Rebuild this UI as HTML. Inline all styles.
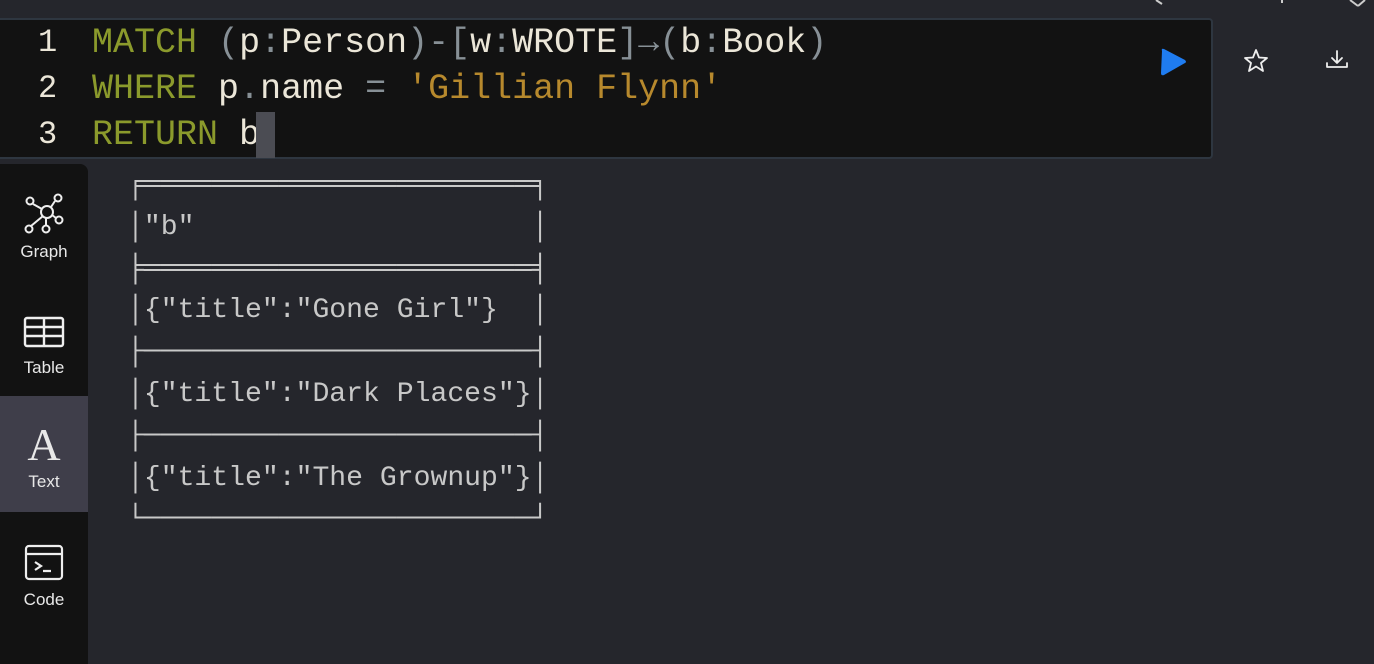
<!DOCTYPE html>
<html><head><meta charset="utf-8"><style>
*{margin:0;padding:0;box-sizing:border-box}
body{width:1374px;height:654px;background:#25262c;position:relative;overflow:hidden;font-family:"Liberation Sans",sans-serif}
.ed{position:absolute;left:-4px;top:18px;width:1217px;height:141px;background:#121212;border:2px solid #2e3640;border-radius:4px}
.code{position:absolute;left:0;top:20px;font-family:"Liberation Mono",monospace;font-size:35px;line-height:46px;white-space:pre;color:#ebe6d8}
.ln{position:absolute;left:38px;top:20px;font-family:"Liberation Mono",monospace;font-size:32px;line-height:46px;color:#ebe6d8;white-space:pre}
.k{color:#8b9a2c}.p{color:#879096}.s{color:#b7892d}
.cur{position:absolute;left:256px;top:112px;width:19px;height:46px;background:#4b4c53}
.side{position:absolute;left:0;top:164px;width:88px;height:500px;background:#121212;border-top-right-radius:8px}
.tab{position:absolute;left:0;width:88px;height:116px;color:#e8e8e8;font-size:17px;text-align:center}
.tab span{position:absolute;left:0;width:88px}
pre{position:absolute;left:127px;top:165px;font-family:"Liberation Mono",monospace;font-size:28.1px;line-height:41.8px;color:#c8c8c8}
</style></head><body>
<div class="ed"></div>
<div class="ln">1
2
3</div>
<div class="code" style="left:92px"><span class="k">MATCH</span> <span class="p">(</span>p<span class="p">:</span>Person<span class="p">)-[</span>w<span class="p">:</span>WROTE<span class="p">]→(</span>b<span class="p">:</span>Book<span class="p">)</span>
<span class="k">WHERE</span> p<span class="p">.</span>name <span class="p">=</span> <span class="s">'Gillian Flynn'</span>
<span class="k">RETURN</span> b</div>
<div class="cur"></div>
<svg style="position:absolute;left:1158px;top:46px" width="32" height="32"><path d="M4 5 Q3 2 6 3 L27 14 Q29 16 27 17 L6 29 Q3 30 3 27 Z" fill="#1f7cf0"/></svg>
<svg style="position:absolute;left:1242px;top:47px" width="28" height="28" fill="none" stroke="#eee" stroke-width="1.8" stroke-linejoin="round"><path d="M14 3 L17 10.5 L25 11 L19 16 L21 24 L14 19.5 L7 24 L9 16 L3 11 L11 10.5 Z"/></svg>
<svg style="position:absolute;left:1324px;top:48px" width="28" height="24" fill="none" stroke="#eee" stroke-width="1.8" stroke-linecap="round" stroke-linejoin="round"><path d="M13 3 V14 M8 10 L13 15 L18 10 M3 15 V19 H23 V15"/></svg>
<svg style="position:absolute;left:1150px;top:0" width="224" height="8" stroke="#ccc" stroke-width="2"><path d="M6 0 L12 4 M132 0 V3 M200 0 L208 6 M215 0 L208 6"/></svg>
<div class="side">
<div class="tab" style="top:0"><svg style="position:absolute;left:22px;top:28px" width="44" height="42" fill="none" stroke="#eee" stroke-width="2"><circle cx="25" cy="20" r="6"/><circle cx="8" cy="9" r="3.5"/><circle cx="36" cy="6" r="3.5"/><circle cx="37" cy="28" r="3.5"/><circle cx="24" cy="37" r="3.5"/><circle cx="7" cy="37" r="3.5"/><path d="M11 12 L20 17 M33 9 L29 15 M34 26 L30 23 M24 33 V26 M9 34 L21 24"/></svg><span style="top:78px">Graph</span></div>
<div class="tab" style="top:116px"><svg style="position:absolute;left:23px;top:36px" width="42" height="34" fill="none" stroke="#eee" stroke-width="2.4"><rect x="2" y="2" width="38" height="28" rx="2"/><path d="M2 11 H40 M2 20 H40 M21 2 V30"/></svg><span style="top:78px">Table</span></div>
<div class="tab" style="top:232px;background:#3f3e4a"><span style="top:22px;font-family:'Liberation Serif',serif;font-size:46px;font-weight:300">A</span><span style="top:76px">Text</span></div>
<div class="tab" style="top:348px"><svg style="position:absolute;left:24px;top:32px" width="40" height="38" fill="none" stroke="#eee" stroke-width="2.2"><rect x="2" y="2" width="36" height="33" rx="3"/><path d="M2 10 H38 M11 18 L17 22 L11 26 M19 27 H27"/></svg><span style="top:78px">Code</span></div>
</div>
<pre>╒═══════════════════════╕
│"b"                    │
╞═══════════════════════╡
│{"title":"Gone Girl"}  │
├───────────────────────┤
│{"title":"Dark Places"}│
├───────────────────────┤
│{"title":"The Grownup"}│
└───────────────────────┘</pre>
</body></html>
